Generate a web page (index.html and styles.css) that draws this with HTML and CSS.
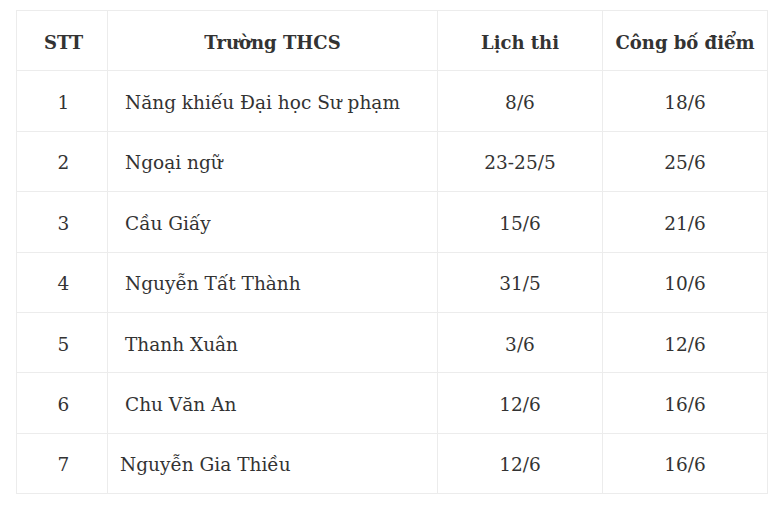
FILE: index.html
```html
<!DOCTYPE html>
<html lang="vi">
<head>
<meta charset="utf-8">
<link rel="stylesheet" href="styles.css">
</head>
<body>
<table class="schedule">
  <colgroup>
    <col class="c-stt"><col class="c-name"><col class="c-date"><col class="c-date">
  </colgroup>
  <thead>
    <tr><th class="stt">STT</th><th>Trường THCS</th><th>Lịch thi</th><th>Công bố điểm</th></tr>
  </thead>
  <tbody>
    <tr><td class="stt">1</td><td class="name">Năng khiếu Đại học Sư phạm</td><td>8/6</td><td>18/6</td></tr>
    <tr><td class="stt">2</td><td class="name">Ngoại ngữ</td><td>23-25/5</td><td>25/6</td></tr>
    <tr><td class="stt">3</td><td class="name">Cầu Giấy</td><td>15/6</td><td>21/6</td></tr>
    <tr><td class="stt">4</td><td class="name">Nguyễn Tất Thành</td><td>31/5</td><td>10/6</td></tr>
    <tr><td class="stt">5</td><td class="name">Thanh Xuân</td><td>3/6</td><td>12/6</td></tr>
    <tr><td class="stt">6</td><td class="name">Chu Văn An</td><td>12/6</td><td>16/6</td></tr>
    <tr><td class="stt">7</td><td class="name name-tight">Nguyễn Gia Thiều</td><td>12/6</td><td>16/6</td></tr>
  </tbody>
</table>
</body>
</html>
```
FILE: styles.css
```css
html, body {
  margin: 0;
  background: #fff;
}
body {
  padding: 10px 12px 0 16px;
  font-family: "DejaVu Serif", "Liberation Serif", serif;
  color: #333;
}
.schedule {
  border-collapse: collapse;
  width: 752px;
  table-layout: fixed;
}
.c-stt { width: 91px; }
.c-name { width: 330px; }
.c-date { width: 165px; }
.schedule th,
.schedule td {
  border: 1px solid #ececec;
  height: 60.4px;
  padding: 3px 0 0;
  box-sizing: border-box;
  text-align: center;
  vertical-align: middle;
  font-size: 18.5px;
}
.schedule th {
  font-weight: bold;
  font-size: 18px;
}
.schedule .stt {
  padding-left: 3px;
}
.schedule td.name {
  text-align: left;
  padding-left: 17px;
}
.schedule td.name-tight {
  padding-left: 12px;
}
```
